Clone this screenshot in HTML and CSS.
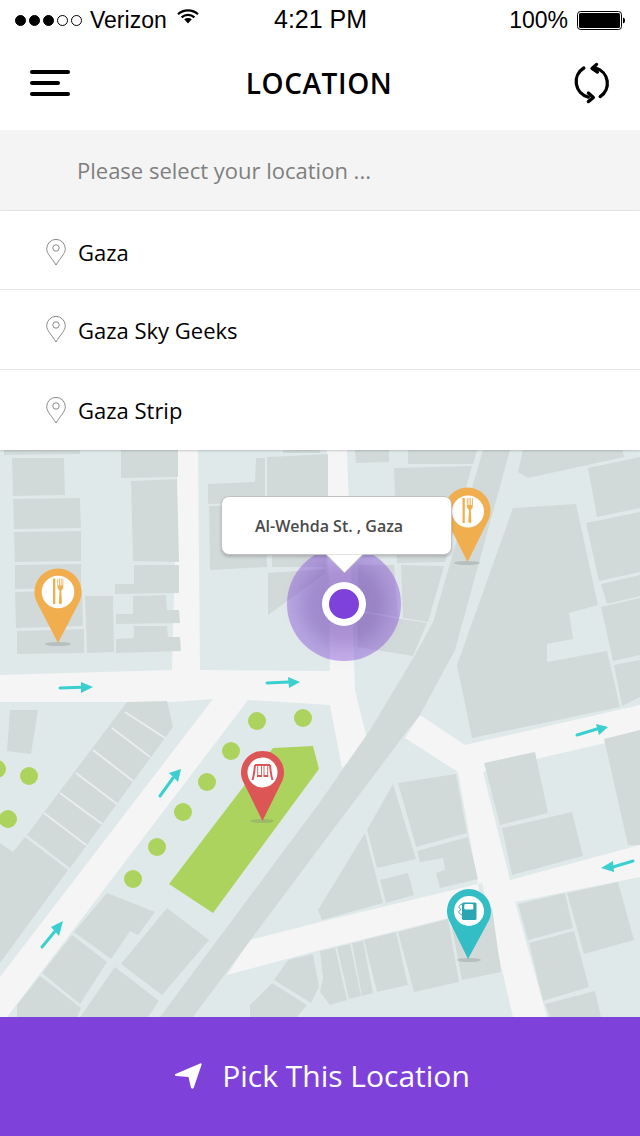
FILE: index.html
```html
<!DOCTYPE html>
<html lang="en">
<head>
<meta charset="utf-8">
<title>Location</title>
<link rel="stylesheet" href="styles.css">
</head>
<body>
<div class="app">
  <div class="status">
    <div class="status-left">
      <div class="dots"><i class="dot"></i><i class="dot"></i><i class="dot"></i><i class="dot off"></i><i class="dot off"></i></div>
      <span class="carrier">Verizon</span>
      <svg class="wifi" viewBox="0 0 22 15"><path class="wifi-arc" d="M1 5.2C6.6 0 15.4 0 21 5.2"/><path class="wifi-arc" d="M4.6 8.4C8.2 5 13.8 5 17.4 8.4"/><path class="wifi-fill" d="M7.2 10.3C9.4 8.5 12.6 8.5 14.8 10.3L11 14.5Z"/></svg>
    </div>
    <span class="time">4:21 PM</span>
    <div class="status-right">
      <span class="pct">100%</span>
      <svg class="battery" viewBox="0 0 48 19"><rect class="bat-out" x="0.5" y="0.5" width="44" height="18" rx="3"/><rect class="bat-in" x="2" y="2" width="41" height="15" rx="1.5"/><path class="bat-in" d="M46 6.5c1.5.4 2 1.5 2 3s-.5 2.600-2 3Z"/></svg>
    </div>
  </div>

  <header class="header">
    <div class="burger"><span class="bar"></span><span class="bar short"></span><span class="bar"></span></div>
    <h1 class="title">LOCATION</h1>
    <svg class="refresh" viewBox="570 58 44 48">
      <path class="ref-line" d="M596 65.500A17.500 17.500 0 0 1 601 97"/>
      <path class="ref-line" d="M597 61.500L592 66L598 70"/>
      <path class="ref-line" d="M588 97.500A17.500 17.500 0 0 1 583 65.500"/>
      <path class="ref-line" d="M588 93L593.500 98L588 102.500"/>
    </svg>
  </header>

  <div class="search">Please select your location ...</div>

  <ul class="results">
    <li class="row first">
      <svg class="row-pin" viewBox="0 0 20 27"><path class="row-pin-line" d="M10 26C6 19 .7 15 .7 9.700a9.300 9.300 0 0 1 18.600 0C19.300 15 14 19 10 26Z"/><circle class="row-pin-line" cx="10" cy="9" r="3.200"/></svg>
      <span>Gaza</span>
    </li>
    <li class="row">
      <svg class="row-pin" viewBox="0 0 20 27"><path class="row-pin-line" d="M10 26C6 19 .7 15 .7 9.700a9.300 9.300 0 0 1 18.600 0C19.300 15 14 19 10 26Z"/><circle class="row-pin-line" cx="10" cy="9" r="3.200"/></svg>
      <span>Gaza Sky Geeks</span>
    </li>
    <li class="row">
      <svg class="row-pin" viewBox="0 0 20 27"><path class="row-pin-line" d="M10 26C6 19 .7 15 .7 9.700a9.300 9.300 0 0 1 18.600 0C19.300 15 14 19 10 26Z"/><circle class="row-pin-line" cx="10" cy="9" r="3.200"/></svg>
      <span>Gaza Strip</span>
    </li>
  </ul>

  <div class="map">
    <svg class="map-svg" viewBox="0 450 640 567">
      <rect class="ground" x="0" y="450" width="640" height="567"/>
      <!-- roads -->
      <g class="road">
        <polygon points="178,450 198,450 200,670 330,671 327,450 347,450 355,690 368,743 342,768 330,705 248,700 7,1017 0,1017 0,977 213,699 172,702 0,702 0,675 172,670"/>
        <polygon points="405,738 420,715 465,745 640,705 640,735 540,758 483,772 510,880 640,845 640,877 515,902 547,1017 513,1017 482,883 320,922 250,940 227,975 320,950 448,918 482,906 458,772"/>
      </g>
      <polygon class="bld" points="483,450 510,450 455,650 420,715 408,730 320,847 193,1017 160,1017 320,802 370,730 415,655 433,622"/>
      <!-- buildings -->
      <g class="bld">
        <polygon points="4,450 80,450 80,454 4,455"/>
        <polygon points="12,458 64,458 65,495 13,496"/>
        <polygon points="13,499 80,498 81,528 14,529"/>
        <polygon points="14,532 81,531 81,561 15,562"/>
        <polygon points="15,565 81,564 81,588 15,589"/>
        <polygon points="15,592 82,590 83,626 16,628"/>
        <polygon points="17,631 84,629 84,653 17,654"/>
        <polygon points="85,596 113,596 114,652 87,653"/>
        <polygon points="121,450 178,450 178,477 121,478"/>
        <polygon points="131,481 177,479 179,562 133,561"/>
        <polygon points="134,565 179,565 179,593 115,594 115,584 134,584"/>
        <polygon points="133,596 166,595 167,610 179,610 180,623 116,624 116,614 133,614"/>
        <polygon points="134,626 167,626 168,637 180,637 181,651 116,653 116,639 134,638"/>
        <polygon points="208,484 255,482 256,458 265,458 265,502 208,504"/>
        <polygon points="209,506 265,505 267,567 210,570"/>
        <polygon points="267,457 328,454 328,497 267,499"/>
        <polygon points="272,500 326,500 326,567 272,567"/>
        <polygon points="268,573 325,569 326,573 268,615"/>
        <polygon points="283,450 320,450 320,453 283,453"/>
        <polygon points="355,450 389,450 389,462 356,463"/>
        <polygon points="408,450 477,450 473,464 408,464"/>
        <polygon points="394,468 472,466 445,562 397,563"/>
        <polygon points="358,565 394,565 398,617 358,610"/>
        <polygon points="401,565 444,566 428,622 403,618"/>
        <polygon points="357,612 427,623 413,656 358,647"/>
        <polygon points="518,472 528,478 624,457 622,450 523,450"/>
        <polygon points="588,468 640,457 640,508 597,517"/>
        <polygon points="586,523 640,512 640,572 599,581"/>
        <polygon points="601,584 640,575 640,596 607,604"/>
        <polygon points="601,607 640,598 640,655 613,661"/>
        <polygon points="614,665 640,660 640,697 622,706"/>
        <polygon points="513,508 576,504 598,605 569,613 573,639 547,644 547,662 607,651 620,707 472,738 457,665"/>
        <polygon points="10,710 38,710 31,754 7,751"/>
        <polygon points="127,702 167,701 173,727 70,868 27,835"/>
        <polygon points="0,843 13,852 25,837 68,870 0,963"/>
        <polygon points="107,893 155,912 138,935 130,931 111,959 74,932"/>
        <polygon points="167,908 209,940 162,995 121,964"/>
        <polygon points="72,935 107,962 80,1004 42,973"/>
        <polygon points="40,976 81,1008 77,1017 17,1017 17,1005"/>
        <polygon points="115,967 159,1001 148,1017 80,1017"/>
        <polygon points="288,960 313,954 319,987 311,1003 274,980"/>
        <polygon points="272,983 307,1005 297,1017 250,1017 250,1005"/>
        <polygon points="320,951 335,948 347,1000 330,1005 320,992 323,978"/>
        <polygon points="337,947 350,944 361,996 349,999"/>
        <polygon points="352,943 363,941 373,993 362,996"/>
        <polygon points="364,940 396,932 408,985 377,992"/>
        <polygon points="398,932 448,919 459,982 414,992"/>
        <polygon points="450,918 492,908 501,972 462,980"/>
        <polygon points="398,783 456,774 467,833 416,847"/>
        <polygon points="393,784 416,859 377,868 367,830"/>
        <polygon points="417,851 468,837 478,879 440,888 436,873 445,870 443,858 420,862"/>
        <polygon points="380,880 408,873 414,895 386,903"/>
        <polygon points="365,833 383,903 322,920 318,910"/>
        <polygon points="484,763 535,752 548,813 500,825"/>
        <polygon points="502,828 572,812 583,856 512,875"/>
        <polygon points="604,739 640,730 640,845 628,845"/>
        <polygon points="518,904 565,893 573,928 528,940"/>
        <polygon points="567,893 618,882 634,940 584,954"/>
        <polygon points="529,943 574,931 589,987 543,1001"/>
        <polygon points="545,1004 595,991 601,1017 550,1017"/>
      </g>
      <g class="slat">
        <line x1="125" y1="712" x2="165" y2="738"/>
        <line x1="112" y1="728" x2="150" y2="757"/>
        <line x1="93" y1="750" x2="133" y2="781"/>
        <line x1="76" y1="773" x2="117" y2="804"/>
        <line x1="60" y1="793" x2="102" y2="824"/>
        <line x1="44" y1="813" x2="86" y2="845"/>
      </g>
      <!-- park -->
      <polygon class="park" points="273,748 313,746 319,769 213,913 169,884"/>
      <g class="park">
        <circle cx="-3" cy="769" r="9"/><circle cx="29" cy="776" r="9"/><circle cx="8" cy="819" r="9"/>
        <circle cx="257" cy="721" r="9"/><circle cx="303" cy="718" r="9"/><circle cx="231" cy="751" r="9"/>
        <circle cx="207" cy="782" r="9"/><circle cx="183" cy="812" r="9"/><circle cx="157" cy="847" r="9"/><circle cx="133" cy="879" r="9"/>
      </g>
      <!-- arrows -->
      <g class="arrow-line">
        <line x1="60" y1="688" x2="82" y2="687.300"/>
        <line x1="267" y1="683" x2="289" y2="682"/>
        <line x1="577" y1="735" x2="597" y2="729"/>
        <line x1="633" y1="861" x2="613" y2="867"/>
        <line x1="160" y1="796" x2="173" y2="778"/>
        <line x1="42" y1="947" x2="56" y2="930"/>
      </g>
      <g class="arrow-head">
        <polygon points="81,682 81,693 93,687"/>
        <polygon points="288,677 289,688 300,682"/>
        <polygon points="596,724 599,735 608,727"/>
        <polygon points="613,861 614,872 601,868"/>
        <polygon points="169,773 178,782 181,769"/>
        <polygon points="51,927 59,936 63,921"/>
      </g>
      <!-- pins -->
      <g class="pin-shadow"><ellipse cx="58" cy="644" rx="13" ry="2"/><ellipse cx="467" cy="563" rx="13" ry="2"/><ellipse cx="262" cy="821" rx="12" ry="2"/><ellipse cx="469" cy="960" rx="12" ry="2"/></g>
      <g transform="translate(58 592)">
        <path class="orange" d="M-20.850 10.830A23.500 23.500 0 1 1 20.850 10.830L0 51Z"/>
        <circle class="disc" r="16.300"/>
        <path class="orange" d="M-5 -13.500H-2.700V12H-5Z"/>
        <path class="orange" d="M-.6 -13.500H.2V-6.500H1.100V-13.500H1.900V-6.500H2.800V-13.500H3.600V-6.500H4.500V-13.500H5.300V-5.500C5.300 -3 3.500 -2.500 3.300 -1L3.900 10.500C3.900 12.500 .8 12.500 .9 10.500L1.500 -1C1.300 -2.500 -.6 -3 -.6 -5.500Z"/>
      </g>
      <g transform="translate(467.500 510.500)">
        <path class="orange" d="M-20.400 10.600A23 23 0 1 1 20.400 10.600L0 51.500Z"/>
        <circle class="disc" transform="translate(.5 1)" r="16"/>
        <path class="orange" d="M-5 -12.500H-2.700V12.500H-5Z"/>
        <path class="orange" d="M-.6 -12.500H.2V-5.500H1.100V-12.500H1.900V-5.500H2.800V-12.500H3.600V-5.500H4.500V-12.500H5.300V-4.500C5.300 -2 3.500 -1.500 3.300 0L3.900 11C3.900 13 .8 13 .9 11L1.500 0C1.300 -1.500 -.6 -2 -.6 -4.500Z"/>
      </g>
      <g transform="translate(262.500 772.500)">
        <path class="red" d="M-19.200 9.600A21.500 21.500 0 1 1 19.200 9.600L0 48.500Z"/>
        <circle class="disc" r="15"/>
        <path class="swing" d="M-7.500 -7.500H7.500M-7.500 -7.500C-8 -2 -8.500 3 -10 7.500M7.500 -7.500C8 -2 8.500 3 10 7.500"/>
        <path class="swing-thin" d="M-4.800 -7V3M-1 -7V3M1.500 -7V3M5.200 -7V3"/>
        <path class="swing" d="M-5.500 3.500H-.5M1 3.500H5.800"/>
      </g>
      <g transform="translate(469 911)">
        <path class="teal" d="M-19.600 10.100A22 22 0 1 1 19.600 10.100L-1 48Z"/>
        <circle class="disc" r="15"/>
        <rect class="pump" x="-7" y="-8.500" width="14.500" height="17.500" rx="1.500"/>
        <rect class="disc" x="-4.700" y="-7" width="9" height="5.500" rx="1.200"/>
        <path class="hose" d="M-7 -7C-11 -5.500 -10.500 -3 -8 -1.500C-11 0 -11 2.500 -7 4"/>
      </g>
      <!-- current position -->
      <circle class="halo" cx="344" cy="604" r="57"/>
      <circle class="glow" cx="344" cy="604" r="44"/>
      <circle class="disc" cx="344" cy="604" r="22"/>
      <circle class="core" cx="344" cy="604" r="15"/>
    </svg>
    <div class="callout"><span class="callout-text">Al-Wehda St. , Gaza</span></div>
    <svg class="defs" width="0" height="0"><defs></defs></svg>
  </div>

  <button class="pick" type="button">
    <svg class="pick-icon" viewBox="0 0 30 30"><path class="pick-arrow" d="M1.500 13.500L27 2.500C28 2 29 3 28.500 4L20.500 27.500C20 29 18 29 17.500 27.500L15 16.500L2 15.500C.8 15.300 .6 14 1.500 13.500Z"/></svg>
    <span>Pick This Location</span>
  </button>
</div>
</body>
</html>
```
FILE: styles.css
```css
* { box-sizing: border-box; }
html, body { margin: 0; padding: 0; background: #fff; }
.app { width: 640px; height: 1136px; display: flex; flex-direction: column; overflow: hidden; font-family: "Open Sans", sans-serif; color: #000; }

.status { height: 40px; position: relative; display: flex; align-items: center; justify-content: space-between; padding: 0 15px; font-family: "Liberation Sans", Arial, sans-serif; font-size: 23px; }
.status-left, .status-right { display: flex; align-items: center; }
.dots { display: flex; gap: 3px; width: 67px; }
.dot { width: 11px; height: 11px; border-radius: 50%; background: #000; border: 1px solid #000; }
.dot.off { background: transparent; }
.carrier { margin-left: 8px; }
.wifi { width: 22px; height: 15px; margin: -8px 0 0 10px; }
.wifi-arc { fill: none; stroke: #000; stroke-width: 2.200; }
.wifi-fill { fill: #000; }
.time { position: absolute; left: 274px; top: 5px; font-size: 25px; line-height: 29px; }
.pct { margin-right: 9px; }
.battery { width: 48px; height: 19px; }
.bat-out { fill: none; stroke: #000; stroke-width: 1; }
.bat-in { fill: #000; }

.header { height: 90px; display: flex; align-items: center; justify-content: space-between; padding: 0 28px 4px 30px; }
.burger { width: 40px; display: flex; flex-direction: column; gap: 7.500px; }
.bar { display: block; height: 3.500px; width: 40px; background: #000; border-radius: 2px; }
.bar.short { width: 30px; }
.title { margin: 0 0 0 -4px; font-size: 28px; font-weight: 600; line-height: 38px; letter-spacing: 0.6px; }
.refresh { width: 40px; height: 48px; }
.ref-line { fill: none; stroke: #000; stroke-width: 3.600; stroke-linecap: round; stroke-linejoin: round; }

.search { height: 81px; background: #f4f4f4; border-bottom: 1px solid #e6e6e6; padding: 0 0 0 77px; display: flex; align-items: center; font-size: 22px; color: #7f7f7f; }

.results { list-style: none; margin: 0; padding: 0; position: relative; z-index: 1; box-shadow: 0 1px 2px rgba(0,0,0,.18); background: #fff; }
.row { height: 80px; border-bottom: 1px solid #e6e6e6; display: flex; align-items: center; gap: 12px; padding-left: 46px; font-size: 22px; }
.row:last-child { border-bottom: 0; }
.row.first { height: 79px; padding-top: 4px; }
.row-pin { width: 20px; height: 27px; flex: none; }
.row-pin-line { fill: none; stroke: #8a8a8a; stroke-width: 1; }

.map { flex: 1; position: relative; overflow: hidden; }
.map-svg { display: block; width: 640px; height: 567px; }
.ground { fill: #e0e9ea; }
.road { fill: #f5f5f5; }
.bld { fill: #d2d9d9; }
.slat line { stroke: #e8eeee; stroke-width: 2; }
.park { fill: #acd35e; }
.arrow-line line { stroke: #3ccfd0; stroke-width: 3; stroke-linecap: round; }
.arrow-head { fill: #3ccfd0; }
.pin-shadow { fill: rgba(120,130,130,.3); }
.orange { fill: #f1ae4f; }
.red { fill: #dc5656; }
.teal { fill: #33bec5; }
.disc { fill: #fff; }
.swing { fill: none; stroke: #dc5656; stroke-width: 2; }
.swing-thin { fill: none; stroke: #dc5656; stroke-width: .9; }
.pump { fill: #2ca5b3; }
.hose { fill: none; stroke: #2ca5b3; stroke-width: 1; }
.halo { fill: #7e42da; fill-opacity: .4; }
.glow { fill: #4b2a80; fill-opacity: .22; filter: blur(9px); }
.core { fill: #7e42da; }

.callout { position: absolute; left: 221px; top: 46px; width: 231px; height: 59px; background: #fff; border: 1px solid #c2c2c2; border-radius: 8px; box-shadow: 0 2px 3px rgba(0,0,0,.18); display: flex; align-items: center; padding-left: 33px; }
.callout::after { content: ""; position: absolute; left: 109px; top: 44px; width: 26px; height: 26px; background: #fff; transform: rotate(45deg); border-right: 1px solid #c2c2c2; border-bottom: 1px solid #c2c2c2; box-shadow: 2px 2px 3px -1px rgba(0,0,0,.12); clip-path: polygon(100% 0, 100% 100%, 0 100%); }
.callout-text { font-size: 16px; font-weight: 600; color: #4a4a4a; position: relative; z-index: 1; }
.defs { position: absolute; }

.pick { height: 119px; border: 0; margin: 0; padding: 0 0 2px 4px; background: #7e42da; color: #fff; display: flex; align-items: center; justify-content: center; gap: 19px; font-family: "Open Sans", sans-serif; font-size: 30px; font-weight: 400; }
.pick-icon { width: 29px; height: 29px; }
.pick-arrow { fill: #fff; }
```
